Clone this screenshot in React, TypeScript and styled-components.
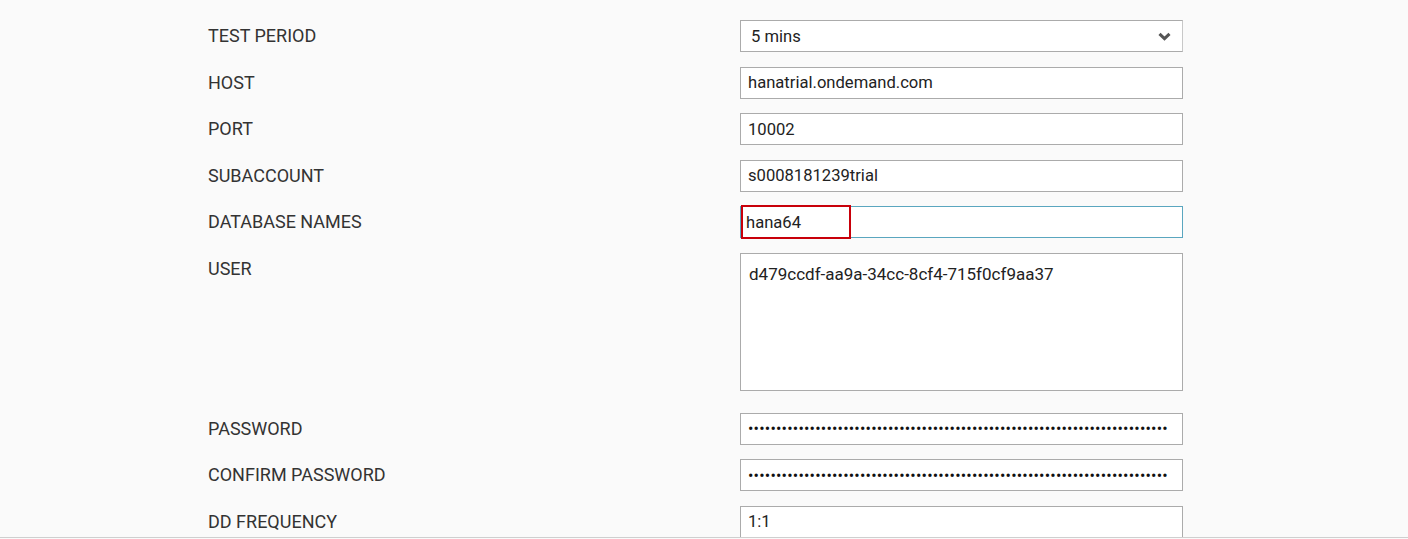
import React from "react";
import styled, { createGlobalStyle } from "styled-components";

const Global = createGlobalStyle`
  html, body { margin: 0; padding: 0; background: #fafafa; }
  body { font-family: Roboto, "Liberation Sans", Arial, sans-serif; }
  * { box-sizing: border-box; }
`;

const Page = styled.div`
  height: 538px;
  overflow: hidden;
  border-bottom: 1px solid #cfcfcf;
  background: #fafafa;
`;

const Form = styled.div`
  display: flex;
  flex-direction: column;
  gap: 14.5px;
  padding: 20px 0 0 208px;
`;

const Row = styled.div<{ $extra?: number }>`
  display: flex;
  align-items: flex-start;
  margin-bottom: ${(p) => p.$extra ?? 0}px;
`;

const Label = styled.label`
  width: 532px;
  flex: none;
  font-size: 18px;
  line-height: 32px;
  color: #333;
`;

const Field = styled.div`
  position: relative;
  width: 443px;
  flex: none;
`;

const TextInput = styled.input<{ $focus?: boolean }>`
  display: block;
  width: 100%;
  height: 32px;
  margin: 0;
  padding: 0 7px;
  border: 1px solid ${(p) => (p.$focus ? "#5aa6bf" : "#ababab")};
  background: #fff;
  font-family: Roboto, "Liberation Sans", Arial, sans-serif;
  font-size: 16.6px;
  color: #222;
  outline: none;
`;

const Dots = styled(TextInput)`
  font-size: 16px;
  letter-spacing: 0.2px;
  color: #111;
`;

const Select = styled.div`
  display: flex;
  align-items: center;
  justify-content: space-between;
  height: 32px;
  padding: 0 11px 0 10px;
  border: 1px solid #ababab;
  border-right-color: #c8c8c8;
  background: #fff;
  font-size: 16.6px;
  color: #222;
`;

const Area = styled.textarea`
  display: block;
  width: 100%;
  height: 138px;
  margin: 0;
  padding: 9px 8px;
  border: 1px solid #ababab;
  background: #fff;
  font-family: Roboto, "Liberation Sans", Arial, sans-serif;
  font-size: 17px;
  line-height: 22px;
  color: #222;
  resize: none;
  outline: none;
`;

const Highlight = styled.div`
  position: absolute;
  left: 1px;
  top: -1px;
  width: 110px;
  height: 34px;
  border: 2px solid #c8000a;
  pointer-events: none;
`;

const Chevron = () => (
  <svg width="13" height="9" viewBox="0 0 13 9">
    <path d="M1.5 1.8 L6.5 6.6 L11.5 1.8" fill="none" stroke="#555" strokeWidth="3" />
  </svg>
);

const dots = "•".repeat(75);

export default function App() {
  return (
    <>
      <Global />
      <Page>
        <Form>
          <Row>
            <Label>TEST PERIOD</Label>
            <Field>
              <Select>
                <span>5 mins</span>
                <Chevron />
              </Select>
            </Field>
          </Row>
          <Row>
            <Label>HOST</Label>
            <Field>
              <TextInput readOnly defaultValue="hanatrial.ondemand.com" />
            </Field>
          </Row>
          <Row>
            <Label>PORT</Label>
            <Field>
              <TextInput readOnly defaultValue="10002" />
            </Field>
          </Row>
          <Row>
            <Label>SUBACCOUNT</Label>
            <Field>
              <TextInput readOnly defaultValue="s0008181239trial" />
            </Field>
          </Row>
          <Row>
            <Label>DATABASE NAMES</Label>
            <Field>
              <TextInput $focus readOnly defaultValue="hana64" style={{ paddingLeft: 5 }} />
              <Highlight />
            </Field>
          </Row>
          <Row $extra={7.5}>
            <Label>USER</Label>
            <Field>
              <Area readOnly defaultValue="d479ccdf-aa9a-34cc-8cf4-715f0cf9aa37" />
            </Field>
          </Row>
          <Row>
            <Label>PASSWORD</Label>
            <Field>
              <Dots readOnly defaultValue={dots} />
            </Field>
          </Row>
          <Row>
            <Label>CONFIRM PASSWORD</Label>
            <Field>
              <Dots readOnly defaultValue={dots} />
            </Field>
          </Row>
          <Row>
            <Label>DD FREQUENCY</Label>
            <Field>
              <TextInput readOnly defaultValue="1:1" />
            </Field>
          </Row>
        </Form>
      </Page>
    </>
  );
}
